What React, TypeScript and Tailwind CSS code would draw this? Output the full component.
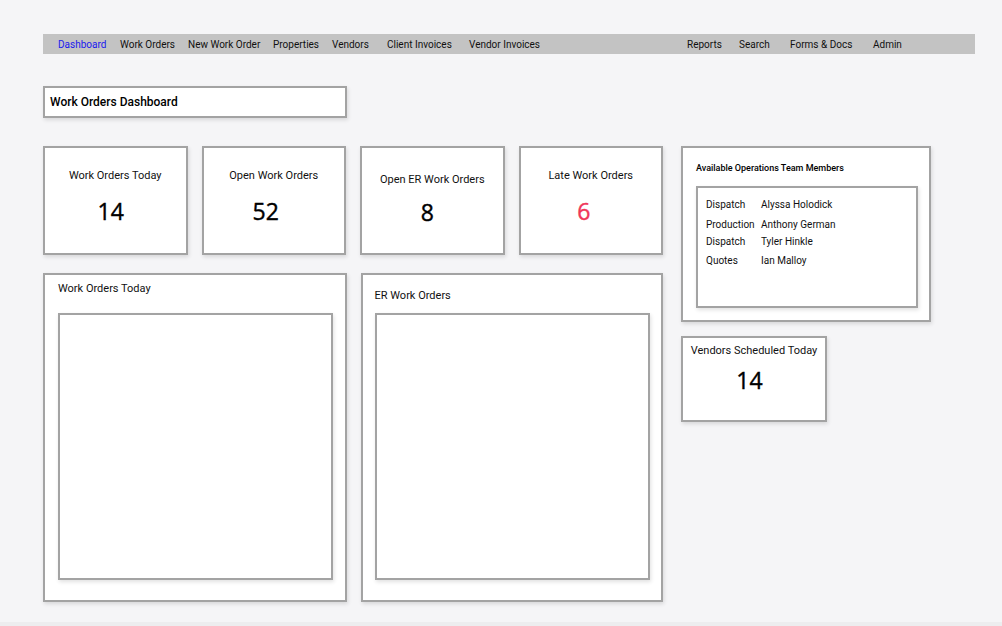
const navLeft = [
  { name: "Dashboard", w: "w-[62px]", active: true },
  { name: "Work Orders", w: "w-[68px]" },
  { name: "New Work Order", w: "w-[85px]" },
  { name: "Properties", w: "w-[59px]" },
  { name: "Vendors", w: "w-[55px]" },
  { name: "Client Invoices", w: "w-[82px]" },
  { name: "Vendor Invoices", w: "w-[218px]" },
];

const navRight = [
  { name: "Reports", w: "w-[52px]" },
  { name: "Search", w: "w-[51px]" },
  { name: "Forms & Docs", w: "w-[83px]" },
  { name: "Admin", w: "w-[60px]" },
];

const team = [
  { role: "Dispatch", name: "Alyssa Holodick", h: "h-[20px]" },
  { role: "Production", name: "Anthony German", h: "h-[17px]" },
  { role: "Dispatch", name: "Tyler Hinkle", h: "h-[19px]" },
  { role: "Quotes", name: "Ian Malloy", h: "h-[19px]" },
];

const box = "bg-white border-2 border-[#a3a3a3] shadow-[1px_2px_4px_rgba(0,0,0,0.12)]";

function StatCard({
  label,
  value,
  red,
  labelPad = "pt-[21px]",
  numPad = "pt-[13px]",
  shift = "pr-[9px]",
}: {
  label: string;
  value: string;
  red?: boolean;
  labelPad?: string;
  numPad?: string;
  shift?: string;
}) {
  return (
    <div className={`${box} w-[145px] h-[109px] flex flex-col items-center ${labelPad}`}>
      <div className="text-[11px] leading-[14px] text-[#111]">{label}</div>
      <div
        className={`${numPad} ${shift} text-[23px] leading-[30px] [-webkit-text-stroke:0.4px_currentColor] ${red ? "text-[#f0365a]" : "text-black"}`}
        style={{ fontFamily: '"Open Sans", sans-serif' }}
      >
        {value}
      </div>
    </div>
  );
}

export default function App() {
  return (
    <div className="w-[1002px] h-[626px] bg-[#ededef] overflow-hidden" style={{ fontFamily: "Roboto, sans-serif" }}>
      <div className="h-[622px] bg-[#f5f5f7] pl-[43px] pt-[34px]">
        {/* Nav */}
        <nav className="w-[932px] h-[20px] bg-[#c3c3c3] flex items-center pl-[15px] text-[10px] text-[#111]">
          {navLeft.map((l) => (
            <span key={l.name} className={`${l.w} ${l.active ? "text-[#1a1aee]" : ""}`}>
              {l.name}
            </span>
          ))}
          {navRight.map((l) => (
            <span key={l.name} className={l.w}>
              {l.name}
            </span>
          ))}
        </nav>

        {/* Title */}
        <div className={`${box} mt-[32px] w-[304px] h-[32px] flex items-center pl-[5px] text-[12px] font-medium text-black`}>
          Work Orders Dashboard
        </div>

        <div className="flex mt-[28px]">
          {/* Left column */}
          <div className="w-[620px]">
            <div className="flex gap-[14px]">
              <StatCard label="Work Orders Today" value="14" shift="pr-[9px]" />
              <StatCard label="Open Work Orders" value="52" shift="pr-[16px]" />
              <StatCard label="Open ER Work Orders" value="8" labelPad="pt-[25px]" numPad="pt-[10px]" shift="pr-[10px]" />
              <StatCard label="Late Work Orders" value="6" red shift="pr-[14px]" />
            </div>

            <div className="flex gap-[14px] mt-[18px]">
              <div className={`${box} w-[304px] h-[329px] pl-[13px] pt-[7px]`}>
                <div className="text-[11px] leading-[14px] text-[#111]">Work Orders Today</div>
                <div className={`${box} mt-[17px] w-[275px] h-[267px]`} />
              </div>
              <div className={`${box} w-[303px] h-[329px] pl-[12px] pt-[14px]`}>
                <div className="text-[11px] leading-[14px] text-[#111]">ER Work Orders</div>
                <div className={`${box} mt-[10px] w-[275px] h-[267px]`} />
              </div>
            </div>
          </div>

          {/* Right column */}
          <div className="ml-[18px]">
            <div className={`${box} w-[250px] h-[176px] pl-[13px] pt-[14px]`}>
              <div className="text-[9px] leading-[12px] font-medium text-black">Available Operations Team Members</div>
              <div className={`${box} mt-[12px] w-[222px] h-[122px] pl-[8px] pt-[10px]`}>
                {team.map((t, i) => (
                  <div key={i} className={`${t.h} flex items-start text-[10px] leading-[13px] text-[#111]`}>
                    <span className="w-[55px]">{t.role}</span>
                    <span>{t.name}</span>
                  </div>
                ))}
              </div>
            </div>

            <div className={`${box} mt-[14px] w-[146px] h-[86px] flex flex-col items-center pt-[6px]`}>
              <div className="text-[11px] leading-[14px] text-[#111]">Vendors Scheduled Today</div>
              <div
                className="pt-[7px] pr-[9px] text-[23px] leading-[30px] [-webkit-text-stroke:0.4px_currentColor] text-black"
                style={{ fontFamily: '"Open Sans", sans-serif' }}
              >
                14
              </div>
            </div>
          </div>
        </div>
      </div>
    </div>
  );
}
